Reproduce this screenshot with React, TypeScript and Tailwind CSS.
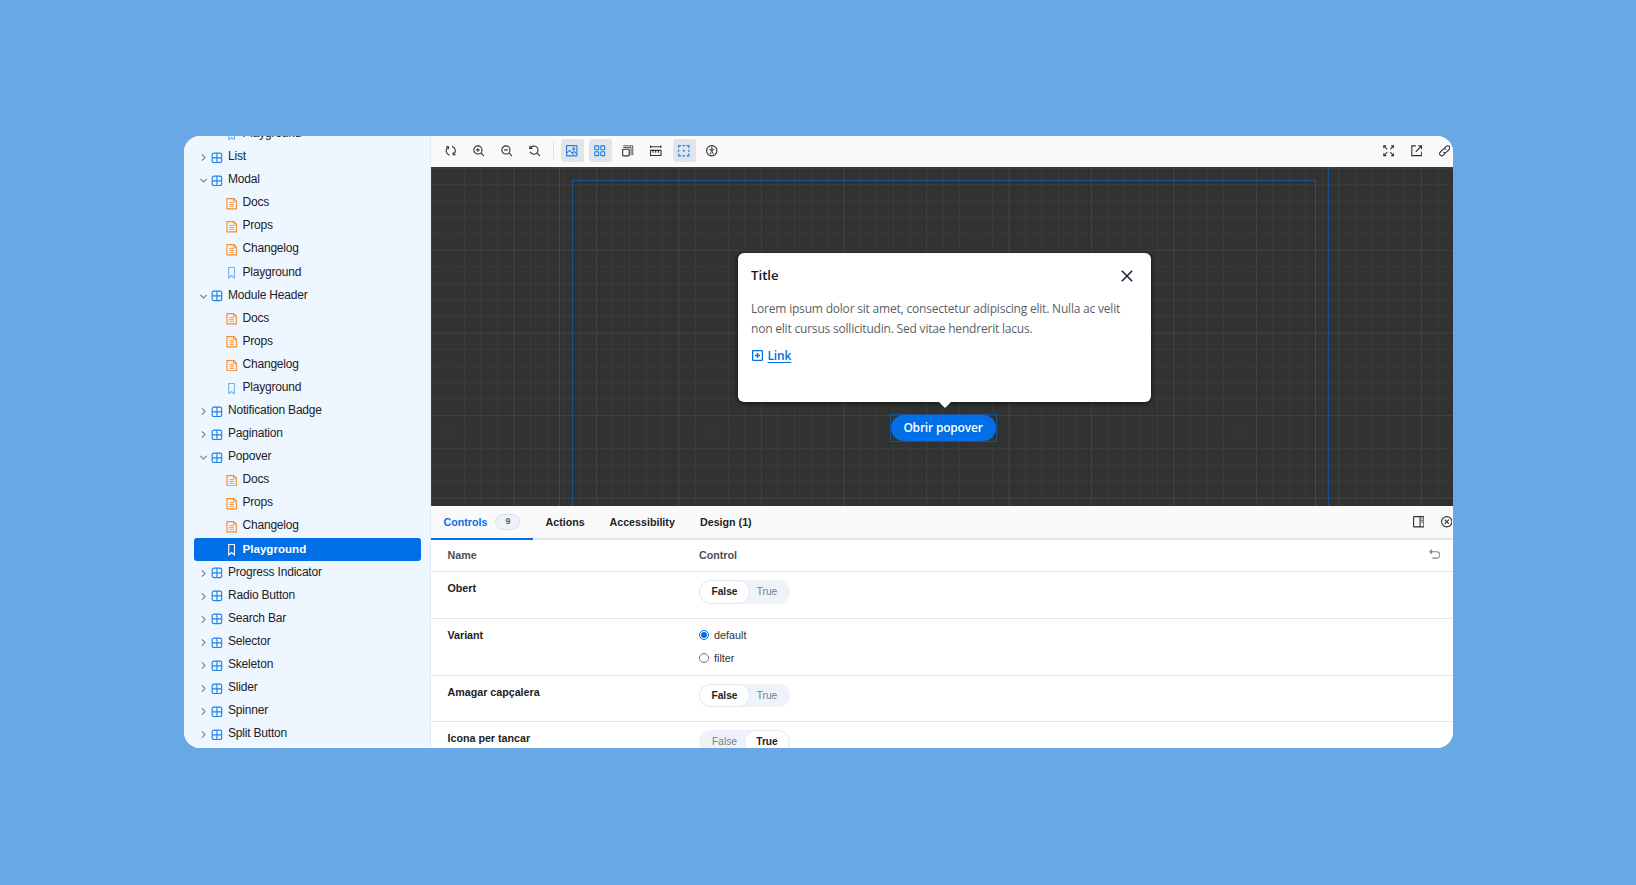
import { ReactNode } from "react";
import clsx from "clsx";

declare type TreeItem = {
  label: string;
  type: "component" | "doc" | "story";
  open?: boolean;
  selected?: boolean;
};

const storyChildren: TreeItem[] = [
  { label: "Docs", type: "doc" },
  { label: "Props", type: "doc" },
  { label: "Changelog", type: "doc" },
];

const tree: TreeItem[] = [
  { label: "Playground", type: "story" },
  { label: "List", type: "component" },
  { label: "Modal", type: "component", open: true },
  ...storyChildren,
  { label: "Playground", type: "story" },
  { label: "Module Header", type: "component", open: true },
  ...storyChildren,
  { label: "Playground", type: "story" },
  { label: "Notification Badge", type: "component" },
  { label: "Pagination", type: "component" },
  { label: "Popover", type: "component", open: true },
  ...storyChildren,
  { label: "Playground", type: "story", selected: true },
  { label: "Progress Indicator", type: "component" },
  { label: "Radio Button", type: "component" },
  { label: "Search Bar", type: "component" },
  { label: "Selector", type: "component" },
  { label: "Skeleton", type: "component" },
  { label: "Slider", type: "component" },
  { label: "Spinner", type: "component" },
  { label: "Split Button", type: "component" },
];

const icons: Record<string, ReactNode> = {
  component: (
    <>
      <rect x="1.4" y="1.4" width="11.6" height="11.6" rx="2.4" />
      <path d="M7.2 1.4V13M1.4 7.2H13" />
    </>
  ),
  doc: (
    <>
      <path d="M1.2.7h8.4l3 3v9.6H1.2z" />
      <path d="M9.2.9v3h3.2M4 5.6h5.8M4 7.9h5.8M4 10.2h5.8" strokeWidth="1" />
    </>
  ),
  story: <path d="M3.3.6h7v12.8l-3.5-3-3.5 3z" />,
  sync: (
    <>
      <path d="M5.4 12.3A5.5 5.5 0 013.6 2.7M8.6 1.7a5.5 5.5 0 011.8 9.6" />
      <path d="M1.2 2.2h2.9v3M12.8 11.8H9.9v-3" />
    </>
  ),
  zoomIn: (
    <>
      <circle cx="6" cy="6" r="5" />
      <path d="M6 3.9v4.2M3.9 6h4.2M9.6 9.6l3.9 3.9" />
    </>
  ),
  zoomOut: (
    <>
      <circle cx="6" cy="6" r="5" />
      <path d="M3.8 6h4.4M9.6 9.6l3.9 3.9" />
    </>
  ),
  zoomReset: (
    <>
      <path d="M1.5 4A5 5 0 111.4 8.2" />
      <path d="M1 1v3.2h3.2M9.6 9.6l3.9 3.9" />
    </>
  ),
  photo: (
    <>
      <rect x=".7" y=".7" width="12.6" height="12.6" rx=".5" />
      <circle cx="9.3" cy="4.5" r="1.2" />
      <path d="M.8 9.8L4.3 6.3l5 5.4M7.6 10l2.4-2.2 3 3" />
    </>
  ),
  grid: (
    <>
      <rect x="1" y="1" width="4.7" height="4.7" rx=".6" />
      <rect x="8.3" y="1" width="4.7" height="4.7" rx=".6" />
      <rect x="1" y="8.3" width="4.7" height="4.7" rx=".6" />
      <rect x="8.3" y="8.3" width="4.7" height="4.7" rx=".6" />
    </>
  ),
  grow: (
    <>
      <rect x=".8" y="5.2" width="8" height="8" rx=".6" />
      <path d="M1.5 3h9.5v9.4M1.5 1h11.6v11.4" strokeWidth="1" />
    </>
  ),
  ruler: (
    <>
      <path d="M.5 2.2h13M.7.7v3M13.3.7v3" />
      <path d="M.6 6.5h12.8v6.3H.6zM3.7 6.5v2.8M6.9 6.5v2.8M10.2 6.5v2.8" />
    </>
  ),
  outline: (
    <>
      <path d="M.8 3.6V.8h2.8M10.4.8h2.8v2.8M13.2 10.4v2.8h-2.8M3.6 13.2H.8v-2.8M5.5.8h3M5.5 13.2h3M.8 5.5v3M13.2 5.5v3" />
      <circle cx="7" cy="7" r=".6" fill="currentColor" />
    </>
  ),
  accessibility: (
    <>
      <circle cx="7" cy="7" r="6.3" />
      <circle cx="7" cy="3.6" r=".4" fill="currentColor" />
      <path d="M3.8 5.7h6.4M6.3 5.8v2.4L5 11.2M7.7 5.8v2.4L9 11.2" strokeWidth="1.1" />
    </>
  ),
  expand: (
    <>
      <path d="M1 4V1h3M10 1h3v3M13 10v3h-3M4 13H1v-3" />
      <path d="M1 1l4.2 4.2M13 1L8.8 5.2M13 13L8.8 8.8M1 13l4.2-4.2" />
    </>
  ),
  share: <path d="M6 1H1v12h12V8M9 1h4v4M13 1L5.8 8.2" />,
  link: (
    <>
      <path d="M6.2 4.1L8.7 1.6a2.6 2.6 0 013.7 3.7L9 8.7a2.6 2.6 0 01-3.8-.2" />
      <path d="M7.8 9.9l-2.5 2.5a2.6 2.6 0 01-3.7-3.7L5 5.3a2.6 2.6 0 013.8.2" />
    </>
  ),
  panel: (
    <>
      <rect x=".7" y=".7" width="12.6" height="12.6" rx=".5" />
      <path d="M8.6.6v12.8" />
      <path d="M10 3.5h2M10 5.5h2M10 7.5h2" strokeWidth="1" />
    </>
  ),
  close: (
    <>
      <circle cx="7" cy="7" r="6.3" />
      <path d="M4.5 4.5l5 5M9.5 4.5l-5 5" />
    </>
  ),
  undo: <path d="M3.6.9L1.1 3.3l2.5 2.5M1.2 3.3h8.2a3.9 3.9 0 010 7.8H4" />,
};

const Icon = ({ icon, className }: { icon: string; className?: string }) => {
  return (
    <svg
      viewBox="0 0 14 14"
      fill="none"
      stroke="currentColor"
      strokeWidth="1.35"
      className={clsx("w-[11.5px] h-[11.5px] shrink-0", className)}
    >
      {icons[icon]}
    </svg>
  );
};

const Chevron = ({ open }: { open?: boolean }) => {
  return (
    <svg
      viewBox="0 0 8 8"
      fill="none"
      stroke="#6b7785"
      strokeWidth="1.2"
      className="w-[7px] h-[7px] mr-[4px] shrink-0"
    >
      <path d={open ? "M.4 2.2L4 5.8l3.6-3.6" : "M2.2.4L5.8 4 2.2 7.6"} />
    </svg>
  );
};

const TreeRow = ({ item }: { item: TreeItem }) => {
  const isRoot = item.type === "component";
  return (
    <div
      className={clsx(
        "flex items-center h-[23.08px] shrink-0 rounded-[3px]",
        isRoot ? "pl-[6.5px]" : "pl-[32.5px]",
        item.selected
          ? "bg-[#006fe8] text-white font-bold text-[11.6px]"
          : "text-[#1d2125] tracking-[-0.2px]"
      )}
    >
      {isRoot && <Chevron open={item.open} />}
      <Icon
        icon={item.type}
        className={clsx(
          isRoot ? "mr-[5.5px]" : "mr-[5px]",
          item.selected && "text-white",
          !item.selected && item.type === "component" && "text-[#1c80e8]",
          !item.selected && item.type === "doc" && "text-[#fb8a24]",
          !item.selected && item.type === "story" && "text-[#7ab2ee]"
        )}
      />
      <span className="-mt-[3px]">{item.label}</span>
    </div>
  );
};

const ToolButton = ({ icon, active }: { icon: string; active?: boolean }) => {
  return (
    <button
      className={clsx(
        "flex items-center justify-center w-[23px] h-[23px] shrink-0 rounded-[3px]",
        active ? "bg-[#dfe5ea] text-[#1c80e8]" : "text-[#2e3338]"
      )}
    >
      <Icon icon={icon} />
    </button>
  );
};

const Toolbar = () => {
  return (
    <div className="flex items-center justify-between h-[31px] shrink-0 pl-[8px] pb-[1.5px] -mr-[3px] bg-[#fafafa]">
      <div className="flex items-center gap-[5px]">
        <ToolButton icon="sync" />
        <ToolButton icon="zoomIn" />
        <ToolButton icon="zoomOut" />
        <ToolButton icon="zoomReset" />
        <div className="w-px h-[17px] ml-[2px] mr-[1.5px] bg-[#dfe3e6]" />
        <ToolButton icon="photo" active />
        <ToolButton icon="grid" active />
        <ToolButton icon="grow" />
        <ToolButton icon="ruler" />
        <ToolButton icon="outline" active />
        <ToolButton icon="accessibility" />
      </div>
      <div className="flex items-center gap-[5px]">
        <ToolButton icon="expand" />
        <ToolButton icon="share" />
        <ToolButton icon="link" />
      </div>
    </div>
  );
};

const Popover = () => {
  return (
    <div className="relative w-[413px] h-[148.5px] px-[13.5px] rounded-[6px] bg-white shadow-[0_1px_4px_1px_rgba(0,0,0,0.45)]">
      <div className="flex items-center justify-between h-[46px] pr-[4px]">
        <h2 className="text-[13.2px] font-semibold text-[#111a24]">Title</h2>
        <svg
          viewBox="0 0 12 12"
          stroke="#14202e"
          strokeWidth="1.5"
          className="w-[12px] h-[12px]"
        >
          <path d="M.8.8l10.4 10.4M11.2.8L.8 11.2" />
        </svg>
      </div>
      <p className="text-[12px] tracking-[-0.2px] leading-[20px] whitespace-nowrap text-[#5b5f64]">
        Lorem ipsum dolor sit amet, consectetur adipiscing elit. Nulla ac velit
        <br />
        non elit cursus sollicitudin. Sed vitae hendrerit lacus.
      </p>
      <a className="flex items-center mt-[6.5px] text-[12px] tracking-[-0.2px] leading-[19px] font-semibold text-[#006fe8]">
        <svg
          viewBox="0 0 11 11"
          fill="none"
          stroke="currentColor"
          strokeWidth="1.3"
          className="w-[11px] h-[11px] ml-[1px] mr-[4.5px]"
        >
          <rect x=".6" y=".6" width="9.8" height="9.8" rx=".8" />
          <path d="M5.5 3v5M3 5.5h5" />
        </svg>
        <span className="underline underline-offset-2">Link</span>
      </a>
      <svg
        viewBox="0 0 14 7"
        className="absolute left-[200px] top-[148px] w-[14px] h-[7px]"
      >
        <path d="M0 0h14L7 7z" fill="#fff" />
      </svg>
    </div>
  );
};

const Canvas = () => {
  return (
    <div className="h-[339px] shrink-0 overflow-hidden bg-[#323230] bg-[linear-gradient(#3e4145_1px,transparent_1px),linear-gradient(90deg,#3e4145_1px,transparent_1px),linear-gradient(#393a3b_1px,transparent_1px),linear-gradient(90deg,#393a3b_1px,transparent_1px)] bg-[size:82.5px_82.5px,82.5px_82.5px,16.5px_16.5px,16.5px_16.5px] bg-[position:0_0.5px,0_0.5px,0_0.5px,0_0.5px]">
      <div className="h-[360px] ml-[128px] w-[770px] border-x border-[#1b5093] pt-[12.5px] px-[12px] font-['Open_Sans',sans-serif]">
        <div className="h-[340px] border border-[#1b5093] pt-[72.5px] pl-[164.5px]">
          <Popover />
          <div className="mt-[12px] ml-[152px] border border-[#1b5093] w-[107px]">
            <button className="block w-full h-[26px] rounded-full bg-[#006fe8] text-white text-[12px] tracking-[-0.2px] font-semibold">
              Obrir popover
            </button>
          </div>
        </div>
      </div>
    </div>
  );
};

const Toggle = ({ value }: { value: boolean }) => {
  const on = "bg-white text-[#1d2125] font-bold border-[#e4eaf0]";
  const off = "text-[#7a7f85] border-transparent";
  return (
    <div className="flex w-[91px] h-[23.5px] rounded-full bg-[#edf3f8] text-[10.2px]">
      <span
        className={clsx(
          "flex items-center justify-center w-[51px] rounded-full border",
          value ? off : on
        )}
      >
        False
      </span>
      <span
        className={clsx(
          "flex items-center justify-center w-[46px] -ml-[6px] rounded-full border",
          value ? on : off
        )}
      >
        True
      </span>
    </div>
  );
};

const Radio = ({ label, checked }: { label: string; checked?: boolean }) => {
  return (
    <label className="flex items-center h-[23px] text-[10.8px] text-[#2e3338]">
      <span
        className={clsx(
          "flex items-center justify-center w-[10px] h-[10px] rounded-full border mr-[5px]",
          checked ? "border-[#006fe8]" : "border-[#767676]"
        )}
      >
        {checked && (
          <span className="w-[6px] h-[6px] rounded-full bg-[#006fe8]" />
        )}
      </span>
      {label}
    </label>
  );
};

const ControlRow = ({
  name,
  className,
  children,
}: {
  name: string;
  className: string;
  children: ReactNode;
}) => {
  return (
    <div
      className={clsx(
        "flex shrink-0 border-t border-[#e6e9ec] pl-[16.5px]",
        className
      )}
    >
      <div className="w-[251.5px] shrink-0 pt-[9.5px] text-[10.7px] leading-[13px] font-bold text-[#1d2125]">
        {name}
      </div>
      {children}
    </div>
  );
};

const Panel = () => {
  return (
    <div className="flex flex-col bg-white">
      <div className="flex justify-between h-[33.5px] shrink-0 bg-[#fafafa] border-b-2 border-[#dfe5ea] text-[10.7px] font-bold text-[#1d2125]">
        <div className="flex items-center">
          <div className="flex items-center self-start h-[33.5px] w-[102px] pl-[12.5px] border-b-2 border-[#006fe8] text-[#006fe8]">
            Controls
            <span className="flex items-center justify-center w-[25px] h-[16px] ml-[8px] rounded-full border border-[#dbe3ea] bg-[#edf3f8] text-[9px] text-[#5c6570]">
              9
            </span>
          </div>
          <div className="ml-[12.5px] w-[64px]">Actions</div>
          <div className="w-[90.5px]">Accessibility</div>
          <div>Design (1)</div>
        </div>
        <div className="flex items-center gap-[5px] -mr-[5px]">
          <ToolButton icon="panel" />
          <ToolButton icon="close" />
        </div>
      </div>
      <div className="flex items-center h-[31.5px] shrink-0 pl-[16.5px] pr-[13px] pb-[1px] text-[10.7px] font-bold text-[#4a4f55]">
        <div className="w-[251.5px]">Name</div>
        <div className="flex-1">Control</div>
        <Icon icon="undo" className="text-[#7a7f85]" />
      </div>
      <ControlRow name="Obert" className="h-[47px]">
        <div className="pt-[8px]">
          <Toggle value={false} />
        </div>
      </ControlRow>
      <ControlRow name="Variant" className="h-[57px]">
        <div className="pt-[4.5px]">
          <Radio label="default" checked />
          <Radio label="filter" />
        </div>
      </ControlRow>
      <ControlRow name="Amagar capçalera" className="h-[46px]">
        <div className="pt-[7.5px]">
          <Toggle value={false} />
        </div>
      </ControlRow>
      <ControlRow name="Icona per tancar" className="h-[46px]">
        <div className="pt-[8px]">
          <Toggle value={true} />
        </div>
      </ControlRow>
    </div>
  );
};

const App = () => {
  return (
    <div className="w-[1636px] h-[885px] overflow-hidden bg-[#68a8e5] pl-[184px] pt-[136px] font-['Liberation_Sans',Arial,sans-serif]">
      <div className="flex w-[1269px] h-[612px] rounded-[16px] overflow-hidden bg-white">
        <nav className="w-[247px] shrink-0 overflow-hidden bg-[#eef7ff] border-r border-[#e3ebf2] px-[9.5px] text-[12px]">
          <div className="flex flex-col -mt-[13px]">
            {tree.map((item, index) => (
              <TreeRow key={index} item={item} />
            ))}
          </div>
        </nav>
        <main className="flex flex-col flex-1 min-w-0 overflow-hidden">
          <Toolbar />
          <Canvas />
          <Panel />
        </main>
      </div>
    </div>
  );
};

export default App;
